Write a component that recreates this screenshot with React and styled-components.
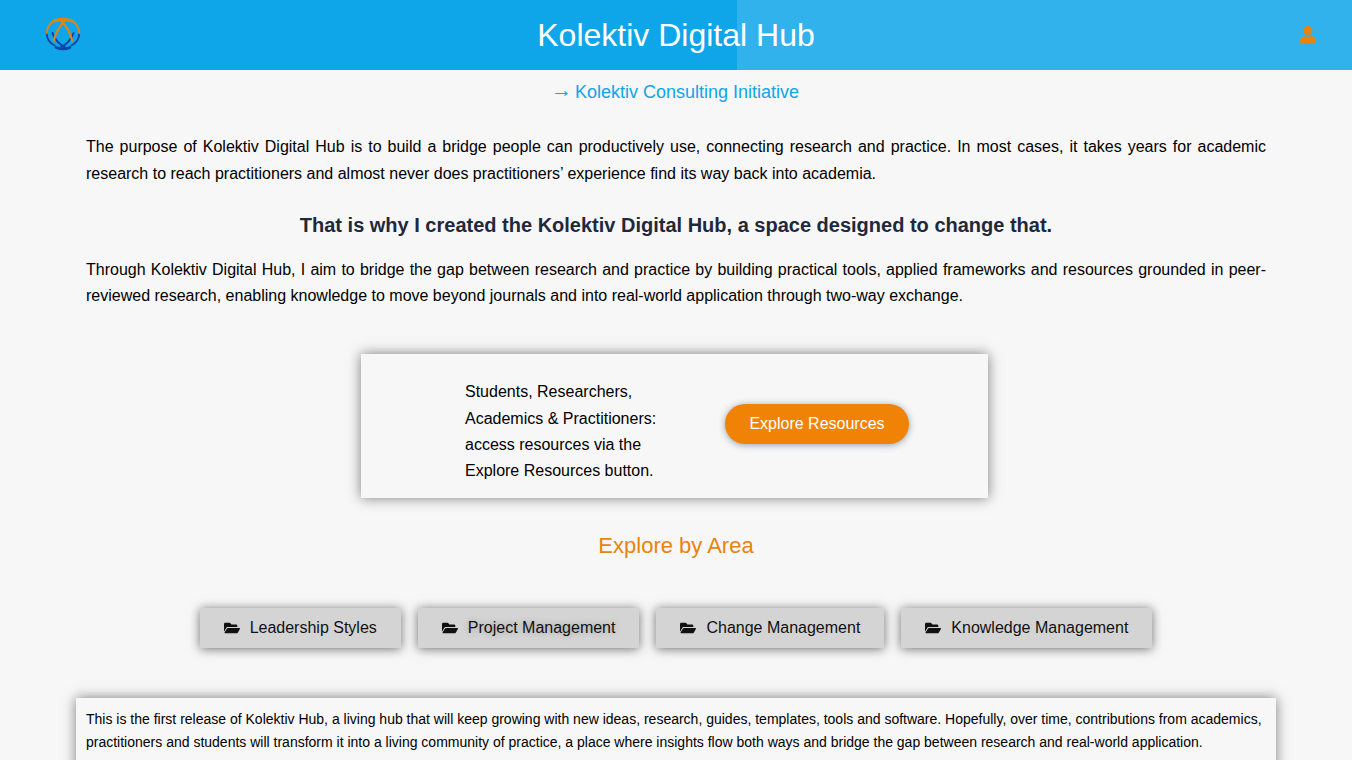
import React from 'react';
import styled, { createGlobalStyle } from 'styled-components';
import { FaFolderOpen, FaUser } from 'react-icons/fa';

const Global = createGlobalStyle`
  html, body { margin: 0; padding: 0; background: #f7f7f7; }
  body { font-family: "Liberation Sans", Arial, sans-serif; color: #000; }
`;

const areas = ['Leadership Styles', 'Project Management', 'Change Management', 'Knowledge Management'];

const Logo = () => (
  <svg width="36" height="36" viewBox="0 0 36 36" fill="none">
    <g stroke="#0a44a8" strokeLinecap="round">
      <path d="M1.700 17c0 5.500 3 10 8 12.500" strokeWidth="1.800" />
      <path d="M34.300 17c0 5.500-3 10-8 12.500" strokeWidth="1.800" />
      <path d="M7.500 17c2 6 6 11 13.500 15" strokeWidth="2" />
      <path d="M28.500 17c-2 6-6 11-13.500 15" strokeWidth="2" />
      <path d="M11 31.500c4.500 1.800 9.500 1.800 14 0" strokeWidth="2.600" />
    </g>
    <g stroke="#de8518" strokeLinecap="round">
      <path d="M1.700 17C2 12 4.500 8 8.300 5.200" strokeWidth="2" />
      <path d="M34.300 17C34 12 31.500 8 27.700 5.200" strokeWidth="2" />
      <path d="M9 5c5.500-2 12.500-2 18 0" strokeWidth="3.200" />
      <path d="M20 4.500C14.500 10 10.500 17 8.800 25" strokeWidth="2.200" />
      <path d="M16 4.500C21.500 10 25.500 17 27.200 25" strokeWidth="2.200" />
    </g>
  </svg>
);

const Page = styled.div`
  width: 100%;
`;

const Header = styled.header`
  position: relative;
  height: 70px;
  background: #0fa5e9;
  display: flex;
  align-items: center;
  justify-content: space-between;
  padding: 0 35px 0 45px;
  overflow: hidden;
`;

const HeaderGlow = styled.div`
  position: absolute;
  top: 0;
  bottom: 0;
  left: 737px;
  right: 0;
  background: rgba(255, 255, 255, 0.15);
`;

const LogoSlot = styled.div`
  position: relative;
  display: flex;
  margin-top: -2px;
`;

const Title = styled.h1`
  position: absolute;
  left: 0;
  right: 0;
  margin: 0;
  text-align: center;
  color: #fff;
  font-size: 32px;
  font-weight: 400;
`;

const UserButton = styled.div`
  position: relative;
  display: flex;
  color: #e8830c;
  font-size: 18px;
`;

const Main = styled.main`
  width: 1200px;
  margin: 0 auto;
  display: flex;
  flex-direction: column;
`;

const Initiative = styled.a`
  margin-top: 12px;
  padding-right: 2px;
  text-align: center;
  font-size: 18px;
  line-height: 21px;
  color: #0fa5e9;
`;

const Arrow = styled.span`
  font-size: 21px;
  line-height: 0;
  vertical-align: 1px;
  margin-right: -2px;
`;

const Body = styled.p`
  margin: ${p => p.$top}px 10px 0;
  font-size: 16px;
  line-height: 26.4px;
  text-align: justify;
`;

const Lead = styled.h2`
  margin: 25.7px 0 0;
  text-align: center;
  font-size: 20px;
  line-height: 24px;
  font-weight: 700;
  color: #1e293b;
`;

const Card = styled.section`
  align-self: center;
  width: 627px;
  height: 144px;
  margin: 44px 3px 0 0;
  box-sizing: border-box;
  background: #f7f7f7;
  box-shadow: 0 0 12px rgba(0, 0, 0, 0.5);
  display: flex;
  align-items: center;
  padding-left: 104px;
  gap: 68px;
`;

const CardText = styled.p`
  width: 192px;
  margin: 12.600px 0 0;
  font-size: 16px;
  line-height: 26.4px;
`;

const ExploreButton = styled.button`
  width: 184px;
  height: 40px;
  margin-top: -4px;
  border: 0;
  border-radius: 20px;
  background: #f08306;
  color: #fff;
  font: 16px "Liberation Sans", Arial, sans-serif;
  box-shadow: 0 1px 7px rgba(20, 50, 90, 0.45);
`;

const AreaHeading = styled.h3`
  margin: 35px 0 0;
  text-align: center;
  font-size: 22px;
  line-height: 26px;
  font-weight: 400;
  color: #e8830c;
`;

const AreaRow = styled.div`
  margin-top: 49px;
  display: flex;
  justify-content: center;
  gap: 17px;
`;

const AreaButton = styled.a`
  height: 40px;
  padding: 0 24px;
  display: flex;
  align-items: center;
  gap: 10px;
  background: #d4d4d4;
  font-size: 16px;
  color: #111;
  box-shadow: 0 1px 10px rgba(0, 0, 0, 0.55);
  text-shadow: ${p => (p.$hot ? '0 0 6px rgba(0, 0, 0, 0.25)' : 'none')};
`;

const Notice = styled.section`
  margin-top: 50px;
  padding: 10px 10px 20px;
  background: #f7f7f7;
  box-shadow: 0 0 12px rgba(0, 0, 0, 0.5);
  font-size: 14px;
  line-height: 23.1px;
`;

export default function App() {
  return (
    <Page>
      <Global />
      <Header>
        <HeaderGlow />
        <LogoSlot><Logo /></LogoSlot>
        <Title>Kolektiv Digital Hub</Title>
        <UserButton><FaUser /></UserButton>
      </Header>
      <Main>
        <Initiative><Arrow>→</Arrow> Kolektiv Consulting Initiative</Initiative>
        <Body $top={31.3}>
          The purpose of Kolektiv Digital Hub is to build a bridge people can productively use, connecting research and practice. In most cases, it takes years for academic research to reach practitioners and almost never does practitioners’ experience find its way back into academia.
        </Body>
        <Lead>That is why I created the Kolektiv Digital Hub, a space designed to change that.</Lead>
        <Body $top={20}>
          Through Kolektiv Digital Hub, I aim to bridge the gap between research and practice by building practical tools, applied frameworks and resources grounded in peer-reviewed research, enabling knowledge to move beyond journals and into real-world application through two-way exchange.
        </Body>
        <Card>
          <CardText>Students, Researchers, Academics &amp; Practitioners: access resources via the Explore Resources button.</CardText>
          <ExploreButton>Explore Resources</ExploreButton>
        </Card>
        <AreaHeading>Explore by Area</AreaHeading>
        <AreaRow>
          {areas.map(a => (
            <AreaButton key={a} $hot={a === 'Project Management'}><FaFolderOpen />{a}</AreaButton>
          ))}
        </AreaRow>
        <Notice>
          This is the first release of Kolektiv Hub, a living hub that will keep growing with new ideas, research, guides, templates, tools and software. Hopefully, over time, contributions from academics, practitioners and students will transform it into a living community of practice, a place where insights flow both ways and bridge the gap between research and real-world application.
        </Notice>
      </Main>
    </Page>
  );
}
